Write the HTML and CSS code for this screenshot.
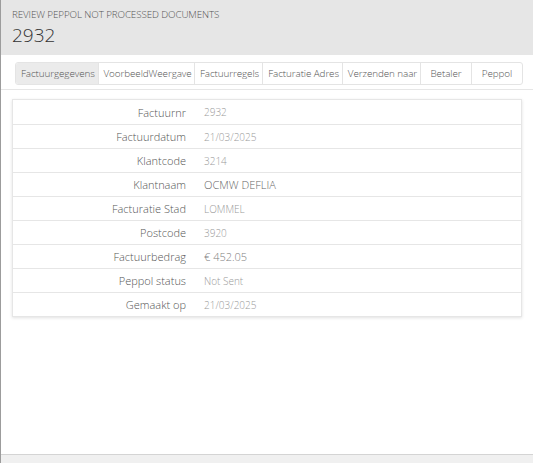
FILE: index.html
```html
<!DOCTYPE html>
<html>
<head>
<meta charset="utf-8">
<link rel="stylesheet" href="styles.css">
</head>
<body>
<div class="page">
  <header class="header">
    <div class="header-sub">REVIEW PEPPOL NOT PROCESSED DOCUMENTS</div>
    <div class="header-title">2932</div>
  </header>
  <nav class="tabs-wrap">
    <div class="tabs">
      <div class="tab active">Factuurgegevens</div>
      <div class="tab">VoorbeeldWeergave</div>
      <div class="tab">Factuurregels</div>
      <div class="tab">Facturatie Adres</div>
      <div class="tab">Verzenden naar</div>
      <div class="tab">Betaler</div>
      <div class="tab">Peppol</div>
    </div>
  </nav>
  <main class="content">
    <div class="card">
      <div class="row"><div class="label">Factuurnr</div><div class="value">2932</div></div>
      <div class="row"><div class="label">Factuurdatum</div><div class="value">21/03/2025</div></div>
      <div class="row"><div class="label">Klantcode</div><div class="value">3214</div></div>
      <div class="row"><div class="label">Klantnaam</div><div class="value strong">OCMW DEFLIA</div></div>
      <div class="row"><div class="label">Facturatie Stad</div><div class="value">LOMMEL</div></div>
      <div class="row"><div class="label">Postcode</div><div class="value">3920</div></div>
      <div class="row"><div class="label">Factuurbedrag</div><div class="value medium">€ 452.05</div></div>
      <div class="row"><div class="label">Peppol status</div><div class="value">Not Sent</div></div>
      <div class="row"><div class="label">Gemaakt op</div><div class="value">21/03/2025</div></div>
    </div>
  </main>
  <footer class="footer"></footer>
</div>
</body>
</html>
```
FILE: styles.css
```css
html, body {
  margin: 0;
  padding: 0;
  background: #ffffff;
}
body {
  font-family: "Open Sans", "Noto Sans", sans-serif;
  font-weight: 300;
  color: #555;
}
.page {
  height: 463px;
  border-left: 1px solid #9c9c9c;
  display: flex;
  flex-direction: column;
  box-sizing: border-box;
}
.header {
  background: #e6e6e6;
  height: 55px;
  box-sizing: border-box;
  padding: 8px 11px 0;
}
.header-sub {
  font-size: 9.8px;
  color: #555;
  line-height: 13px;
  letter-spacing: -0.1px;
}
.header-title {
  font-size: 19px;
  color: #333;
  line-height: 24px;
  margin-top: 2px;
}
.tabs-wrap {
  padding: 7px 10px 4px 14px;
  border-bottom: 1px solid #e6e6e6;
  display: flex;
}
.tabs {
  display: flex;
  border: 1px solid #e4e4e4;
  border-radius: 3px;
  overflow: hidden;
  height: 21px;
}
.tab {
  font-size: 9.9px;
  line-height: 21px;
  padding: 0 5px;
  min-width: 40px;
  text-align: center;
  color: #555;
  border-left: 1px solid #e4e4e4;
  letter-spacing: -0.1px;
  white-space: nowrap;
}
.tab:first-child {
  border-left: none;
}
.tab.active {
  background: #ebebeb;
}
.content {
  padding: 9px 11px 0 11px;
}
.card {
  border: 1px solid #e6e6e6;
  box-shadow: 0 1px 3px rgba(0, 0, 0, 0.12);
}
.row {
  display: grid;
  grid-template-columns: 173px 1fr;
  column-gap: 18px;
  height: 24px;
  align-items: center;
  border-top: 1px solid #e6e6e6;
  box-sizing: border-box;
}
.row:first-child {
  border-top: none;
}
.label {
  text-align: right;
  font-size: 11px;
  color: #555;
}
.value {
  font-size: 10px;
  color: #9a9a9a;
}
.value.strong {
  font-size: 11px;
  color: #666;
}
.value.medium {
  font-size: 11px;
  color: #808080;
}
.footer {
  margin-top: auto;
  height: 8px;
  background: #f0f0f0;
  border-top: 1px solid #d4d4d4;
}
```
